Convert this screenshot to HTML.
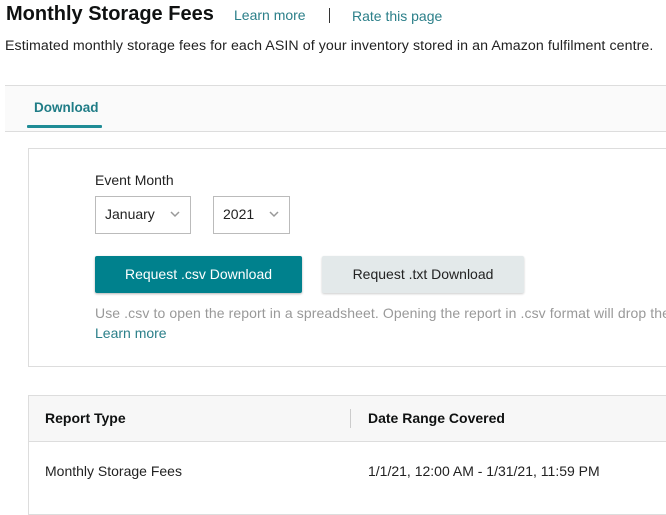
<!DOCTYPE html>
<html><head><meta charset="utf-8"><style>
*{margin:0;padding:0;box-sizing:border-box}
body{width:666px;height:502px;overflow:hidden;background:#fff;font-family:"Liberation Sans",Arial,sans-serif;color:#111;position:relative}
.a{position:absolute;white-space:nowrap}
.teal{color:#2b7f89}
</style></head><body>
<div class="a" style="left:6px;top:3px;font-size:20px;font-weight:bold;color:#0f1111">Monthly Storage Fees</div>
<div class="a teal" style="left:234px;top:7px;font-size:14px">Learn more</div>
<div class="a" style="left:329px;top:8px;width:1px;height:15px;background:#333"></div>
<div class="a teal" style="left:352px;top:8px;font-size:14px">Rate this page</div>
<div class="a" style="left:5px;top:38px;font-size:14.2px;color:#222;letter-spacing:0.08px">Estimated monthly storage fees for each ASIN of your inventory stored in an Amazon fulfilment centre.</div>

<div class="a" style="left:5px;top:85px;width:661px;height:47px;background:#fafafa;border-top:1px solid #ddd;border-bottom:1px solid #ddd"></div>
<div class="a" style="left:34px;top:100px;font-size:13.5px;font-weight:bold;color:#1f7c86">Download</div>
<div class="a" style="left:27px;top:125px;width:75px;height:3px;background:#1f8c96;border-radius:1px"></div>

<div class="a" style="left:28px;top:148px;width:660px;height:219px;border:1px solid #ddd;background:#fff"></div>
<div class="a" style="left:95px;top:172px;font-size:14px;color:#222">Event Month</div>
<div class="a" style="left:95px;top:196px;width:96px;height:38px;border:1px solid #bbb;background:#fff"></div>
<div class="a" style="left:105px;top:206px;font-size:14px;color:#222">January</div>
<svg class="a" style="left:169px;top:210px" width="12" height="8"><path d="M2 2L6 6L10 2" stroke="#999" stroke-width="1.5" fill="none"/></svg>
<div class="a" style="left:213px;top:196px;width:77px;height:38px;border:1px solid #bbb;background:#fff"></div>
<div class="a" style="left:223px;top:206px;font-size:14px;color:#222">2021</div>
<svg class="a" style="left:268px;top:210px" width="12" height="8"><path d="M2 2L6 6L10 2" stroke="#999" stroke-width="1.5" fill="none"/></svg>

<div class="a" style="left:95px;top:256px;width:207px;height:37px;background:#00818d;border-radius:2px;box-shadow:0 1px 2px rgba(0,0,0,.3);color:#fff;font-size:14px;text-align:center;line-height:37px">Request .csv Download</div>
<div class="a" style="left:322px;top:256px;width:202px;height:37px;background:#e3e9ea;border-radius:2px;box-shadow:0 1px 2px rgba(0,0,0,.2);color:#222;font-size:14px;text-align:center;line-height:37px">Request .txt Download</div>
<div class="a" style="left:95px;top:305px;font-size:14px;color:#999;letter-spacing:0.1px">Use .csv to open the report in a spreadsheet. Opening the report in .csv format will drop the</div>
<div class="a teal" style="left:95px;top:325px;font-size:14px">Learn more</div>

<div class="a" style="left:28px;top:395px;width:660px;height:120px;border:1px solid #ddd;background:#fff"></div>
<div class="a" style="left:29px;top:396px;width:660px;height:46px;background:#f7f7f7;border-bottom:1px solid #ddd"></div>
<div class="a" style="left:45px;top:410px;font-size:14px;font-weight:bold;color:#0f1111">Report Type</div>
<div class="a" style="left:350px;top:409px;width:1px;height:19px;background:#ccc"></div>
<div class="a" style="left:368px;top:410px;font-size:14px;font-weight:bold;color:#0f1111">Date Range Covered</div>
<div class="a" style="left:45px;top:463px;font-size:14px;color:#222">Monthly Storage Fees</div>
<div class="a" style="left:368px;top:463px;font-size:14px;color:#222">1/1/21, 12:00 AM - 1/31/21, 11:59 PM</div>
</body></html>
